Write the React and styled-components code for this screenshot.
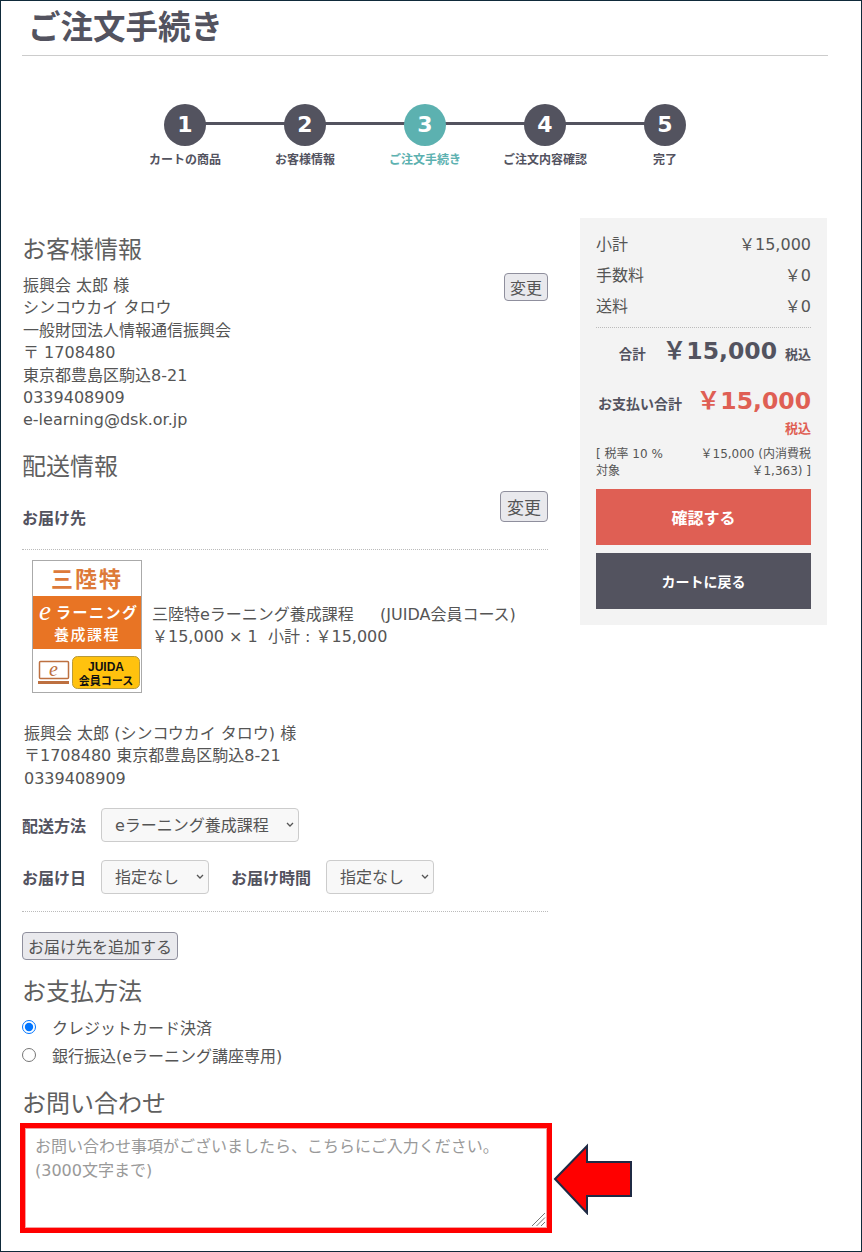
import React from 'react';
import styled, { createGlobalStyle } from 'styled-components';

const GlobalStyle = createGlobalStyle`
  * { box-sizing: border-box; }
  html, body { margin: 0; padding: 0; background: #fff; }
  body {
    font-family: "DejaVu Sans", "Noto Sans CJK JP", sans-serif;
    color: #555;
    font-size: 16px;
  }
`;

const Page = styled.div`
  position: relative;
  width: 862px;
  height: 1252px;
  overflow: hidden;
  border: 1px solid #0f2a3a;
  padding: 0 33px 0 21px;
`;

const Title = styled.h1`
  margin: 0;
  height: 55px;
  padding: 4px 0 0 6px;
  border-bottom: 1px solid #ccc;
  font-size: 32.5px;
  line-height: 46px;
  font-weight: 700;
  color: #53535f;
`;

const Steps = styled.ol`
  list-style: none;
  display: flex;
  justify-content: center;
  margin: 48px 0 0;
  padding: 0;
`;

const Step = styled.li`
  position: relative;
  width: 120px;
  display: flex;
  flex-direction: column;
  align-items: center;
  color: ${(p) => (p.$active ? '#5cb1b0' : '#53535f')};

  &:not(:last-child)::after {
    content: '';
    position: absolute;
    top: 18px;
    left: 60px;
    width: 120px;
    height: 3px;
    background: #53535f;
  }
`;

const StepNum = styled.span`
  position: relative;
  z-index: 1;
  width: 42px;
  height: 42px;
  border-radius: 50%;
  background: ${(p) => (p.$active ? '#5cb1b0' : '#53535f')};
  color: #fff;
  font-size: 22px;
  font-weight: 700;
  line-height: 41px;
  text-align: center;
`;

const StepLabel = styled.span`
  margin-top: 6px;
  font-size: 12px;
  line-height: 17px;
  font-weight: 700;
  white-space: nowrap;
`;

const Columns = styled.div`
  display: flex;
  align-items: flex-start;
  justify-content: space-between;
  margin-top: 49px;
`;

const Main = styled.main`
  width: 526px;
`;

const SectionTitle = styled.h2`
  margin: ${(p) => p.$top || 0}px 0 0;
  font-size: 24px;
  line-height: 32px;
  font-weight: 400;
  color: #5f5f5f;
`;

const Info = styled.div`
  display: flex;
  justify-content: space-between;
  align-items: flex-start;
  margin-top: 7px;
`;

const Lines = styled.div`
  font-size: 16px;
  line-height: 22.4px;
  margin-left: ${(p) => p.$left || 1}px;
  margin-top: ${(p) => p.$top || 0}px;
`;

const GrayButton = styled.button`
  font-family: inherit;
  font-size: ${(p) => p.$size || 16}px;
  color: #555;
  height: ${(p) => p.$height || 28}px;
  padding: 0 ${(p) => p.$pad || 5}px;
  background: #e9e9ed;
  border: 1px solid #8f8f9d;
  border-radius: 4px;
  white-space: nowrap;
`;

const SubHead = styled.div`
  display: flex;
  justify-content: space-between;
  align-items: flex-end;
  margin-top: 8px;
  padding-bottom: 27px;
  border-bottom: 1px dotted #bbb;
`;

const Bold = styled.span`
  font-weight: 700;
  font-size: 16px;
  color: #53535f;
  white-space: nowrap;
`;

const DeliveryLabel = styled(Bold)`
  margin-bottom: -7px;
`;

const Product = styled.div`
  display: flex;
  align-items: center;
  gap: 9px;
  margin: 10px 0 0 10px;
`;

const Thumb = styled.svg`
  display: block;
  flex: none;
`;

const FieldRow = styled.div`
  display: flex;
  align-items: center;
  margin-top: ${(p) => p.$top || 0}px;
`;

const FieldLabel = styled(Bold)`
  width: ${(p) => p.$width}px;
  margin-left: ${(p) => p.$left || 0}px;
`;

const Chevron = () => (
  <ChevronIcon width="8" height="5" viewBox="0 0 8 5">
    <path d="M1 1 L4 4 L7 1" fill="none" stroke="#555" strokeWidth="1.3" />
  </ChevronIcon>
);

const ChevronIcon = styled.svg`
  position: absolute;
  right: 5px;
  top: 14px;
  pointer-events: none;
`;

const SelectBox = styled.span`
  position: relative;
  display: block;
  width: ${(p) => p.$width}px;
  height: 34px;
`;

const Select = styled.select`
  appearance: none;
  display: block;
  width: 100%;
  height: 100%;
  font-family: inherit;
  font-size: 16px;
  color: #555;
  padding: 0 8px 0 13px;
  background: #f8f8f8;
  border: 1px solid #ccc;
  border-radius: 4px;
`;

const Rule = styled.hr`
  margin: 17px 0 20px;
  border: 0;
  border-top: 1px dotted #bbb;
`;

const RadioList = styled.div`
  margin-top: 5px;
`;

const RadioRow = styled.label`
  display: flex;
  align-items: center;
  gap: 16px;
  height: 28px;
  font-size: 16px;
`;

const Radio = styled.input`
  margin: 0;
  width: 14px;
  height: 14px;
`;

const InquiryFrame = styled.div`
  position: relative;
  width: 532px;
  height: 110px;
  margin: 3px 0 0 -2px;
  border: 5px solid #f00;
`;

const Inquiry = styled.textarea`
  display: block;
  width: 100%;
  height: 100%;
  padding: 6px 9px;
  border: 1px solid #f4a0a0;
  font-family: inherit;
  font-size: 16px;
  line-height: 24px;
  outline: 0;
  resize: none;

  &::placeholder {
    color: #999;
    opacity: 1;
  }
`;

const ResizeGrip = styled.svg`
  position: absolute;
  right: 1px;
  bottom: 1px;
`;

const Arrow = styled.svg`
  position: absolute;
  left: 551px;
  top: 1142px;
`;

const Summary = styled.aside`
  width: 247px;
  margin-right: 1px;
  padding: 11px 16px 16px;
  background: #f3f3f3;
`;

const SumRow = styled.div`
  display: flex;
  justify-content: space-between;
  height: 31px;
  line-height: 31px;
  font-size: 16px;
`;

const Total = styled.div`
  display: flex;
  justify-content: flex-end;
  align-items: baseline;
  gap: 17px;
  margin-top: 5px;
  padding-top: 2px;
  border-top: 1px dotted #bbb;
  color: #53535f;
  font-weight: 700;
`;

const TotalLabel = styled.span`
  font-size: ${(p) => p.$size || 13.5}px;
  white-space: nowrap;
`;

const TotalPrice = styled.span`
  font-size: 23.5px;
  line-height: 42px;
  white-space: nowrap;
  color: ${(p) => p.$color || '#53535f'};
`;

const TaxTag = styled.span`
  font-size: 13px;
  margin-left: -9px;
`;

const PayTotal = styled(Total)`
  justify-content: space-between;
  gap: 0;
  margin-top: 8px;
  padding-top: 0;
  border-top: 0;
  padding-left: 2px;
`;

const PayTax = styled.div`
  text-align: right;
  font-size: 13px;
  font-weight: 700;
  line-height: 17px;
  margin-top: -2px;
  color: #df5f54;
`;

const TaxDetail = styled.div`
  display: flex;
  justify-content: space-between;
  margin-top: 9px;
  font-size: 12px;
  line-height: 17px;
`;

const TaxRate = styled.span`
  width: 78px;
`;

const TaxAmount = styled.span`
  width: 112px;
  text-align: right;
`;

const ActionButton = styled.button`
  display: block;
  width: 100%;
  height: 56px;
  margin-top: ${(p) => p.$top}px;
  border: 0;
  background: ${(p) => p.$bg};
  color: #fff;
  font-family: inherit;
  font-size: ${(p) => p.$size}px;
  font-weight: 700;
`;

const steps = ['カートの商品', 'お客様情報', 'ご注文手続き', 'ご注文内容確認', '完了'];

const CourseThumb = () => (
  <Thumb width="110" height="133" viewBox="0 0 110 133">
    <rect x="0.5" y="0.5" width="109" height="132" fill="#fff" stroke="#aaa" />
    <text x="55" y="27" textAnchor="middle" fontSize="22" fontWeight="700" fill="#dd7a3a" letterSpacing="2">三陸特</text>
    <rect x="1" y="36" width="108" height="53" fill="#e87424" />
    <text x="7" y="60" fontSize="27" fontStyle="italic" fill="#fff" fontFamily="Liberation Serif, serif">e</text>
    <text x="24" y="58" fontSize="15" fontWeight="700" fill="#fff" textLength="81">ラーニング</text>
    <text x="55" y="80" textAnchor="middle" fontSize="15" fontWeight="500" fill="#fff" letterSpacing="1.5">養成課程</text>
    <rect x="7.5" y="101.5" width="29" height="17" rx="1" fill="#fff" stroke="#bd7040" strokeWidth="1.5" />
    <text x="21.5" y="116" textAnchor="middle" fontSize="20" fontStyle="italic" fill="#bd7040" fontFamily="Liberation Serif, serif">e</text>
    <rect x="6" y="121" width="31" height="3" fill="#bd7040" />
    <rect x="40.5" y="96.5" width="67" height="32" rx="5" fill="#ffc20e" stroke="#b89a3a" />
    <text x="74" y="111" textAnchor="middle" fontSize="12" fontWeight="700" fill="#111" fontFamily="Liberation Sans, sans-serif">JUIDA</text>
    <text x="74" y="125" textAnchor="middle" fontSize="11" fontWeight="700" fill="#111">会員コース</text>
  </Thumb>
);

const App = () => (
  <Page>
    <GlobalStyle />
    <Title>ご注文手続き</Title>

    <Steps>
      {steps.map((label, i) => (
        <Step key={label} $active={i === 2}>
          <StepNum $active={i === 2}>{i + 1}</StepNum>
          <StepLabel>{label}</StepLabel>
        </Step>
      ))}
    </Steps>

    <Columns>
      <Main>
        <SectionTitle $top={16}>お客様情報</SectionTitle>
        <Info>
          <Lines $top={2}>
            振興会 太郎 様<br />
            シンコウカイ タロウ<br />
            一般財団法人情報通信振興会<br />
            〒 1708480<br />
            東京都豊島区駒込8-21<br />
            0339408909<br />
            e-learning@dsk.or.jp
          </Lines>
          <GrayButton>変更</GrayButton>
        </Info>

        <SectionTitle $top={19}>配送情報</SectionTitle>
        <SubHead>
          <DeliveryLabel>お届け先</DeliveryLabel>
          <GrayButton $height={31} $size={17} $pad={6}>変更</GrayButton>
        </SubHead>

        <Product>
          <CourseThumb />
          <Lines $left={1}>
            三陸特eラーニング養成課程　&nbsp;&nbsp;(JUIDA会員コース)<br />
            ￥15,000 × 1&nbsp;&nbsp;小計 : ￥15,000
          </Lines>
        </Product>

        <Lines $left={2} $top={30}>
          振興会 太郎 (シンコウカイ タロウ) 様<br />
          〒1708480 東京都豊島区駒込8-21<br />
          0339408909
        </Lines>

        <FieldRow $top={18}>
          <FieldLabel $width={79}>配送方法</FieldLabel>
          <SelectBox $width={198}>
            <Select><option>eラーニング養成課程</option></Select>
            <Chevron />
          </SelectBox>
        </FieldRow>
        <FieldRow $top={18}>
          <FieldLabel $width={79}>お届け日</FieldLabel>
          <SelectBox $width={108}>
            <Select><option>指定なし</option></Select>
            <Chevron />
          </SelectBox>
          <FieldLabel $width={95} $left={22}>お届け時間</FieldLabel>
          <SelectBox $width={108}>
            <Select><option>指定なし</option></Select>
            <Chevron />
          </SelectBox>
        </FieldRow>
        <Rule />
        <GrayButton>お届け先を追加する</GrayButton>

        <SectionTitle $top={16}>お支払方法</SectionTitle>
        <RadioList>
          <RadioRow>
            <Radio type="radio" name="pay" defaultChecked />
            クレジットカード決済
          </RadioRow>
          <RadioRow>
            <Radio type="radio" name="pay" />
            銀行振込(eラーニング講座専用)
          </RadioRow>
        </RadioList>

        <SectionTitle $top={19}>お問い合わせ</SectionTitle>
        <InquiryFrame>
          <Inquiry placeholder={'お問い合わせ事項がございましたら、こちらにご入力ください。\n(3000文字まで)'} />
          <ResizeGrip width="15" height="15" viewBox="0 0 15 15">
            <path d="M1 14 L14 1 M5.5 14 L14 5.5 M10 14 L14 10" stroke="#777" strokeWidth="1" fill="none" />
          </ResizeGrip>
        </InquiryFrame>
      </Main>

      <Summary>
        <SumRow><span>小計</span><span>￥15,000</span></SumRow>
        <SumRow><span>手数料</span><span>￥0</span></SumRow>
        <SumRow><span>送料</span><span>￥0</span></SumRow>
        <Total>
          <TotalLabel>合計</TotalLabel>
          <TotalPrice>￥15,000</TotalPrice>
          <TaxTag>税込</TaxTag>
        </Total>
        <PayTotal>
          <TotalLabel $size={14}>お支払い合計</TotalLabel>
          <TotalPrice $color="#df5f54">￥15,000</TotalPrice>
        </PayTotal>
        <PayTax>税込</PayTax>
        <TaxDetail>
          <TaxRate>[ 税率 10 % 対象</TaxRate>
          <TaxAmount>￥15,000 (内消費税￥1,363) ]</TaxAmount>
        </TaxDetail>
        <ActionButton $top={9} $bg="#df5f54" $size={16}>確認する</ActionButton>
        <ActionButton $top={8} $bg="#53535f" $size={14}>カートに戻る</ActionButton>
      </Summary>
    </Columns>

    <Arrow width="82" height="72" viewBox="0 0 82 72">
      <path d="M3 36 L35 3 L35 19 L79 19 L79 53 L35 53 L35 70 Z" fill="#f00" stroke="#1f2a44" strokeWidth="2" />
    </Arrow>
  </Page>
);

export default App;
